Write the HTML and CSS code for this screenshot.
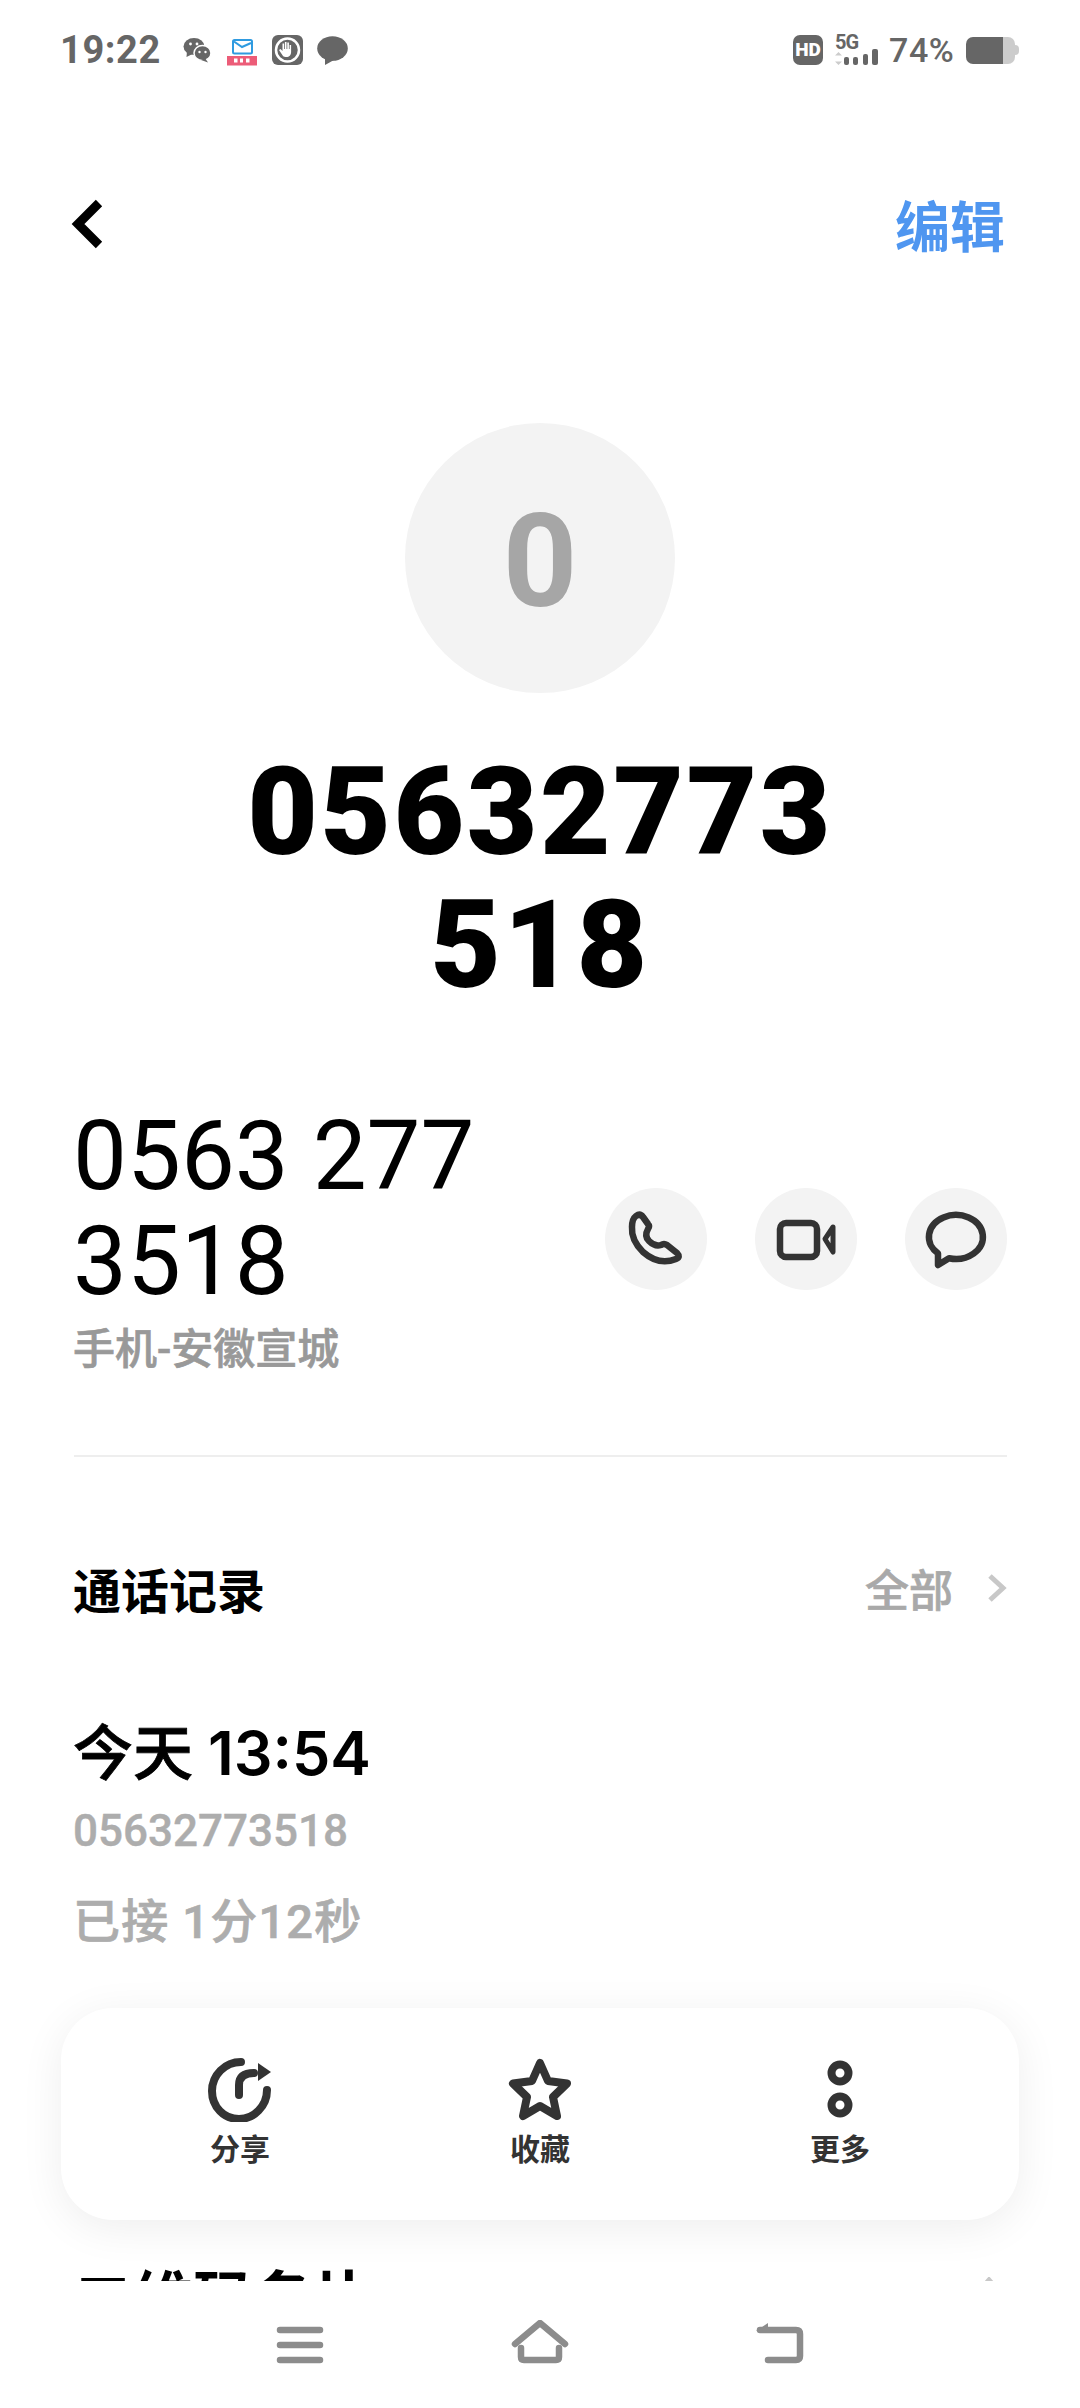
FILE: index.html
```html
<!DOCTYPE html>
<html lang="zh-CN">
<head>
<meta charset="utf-8">
<title>联系人详情</title>
<link rel="stylesheet" href="styles.css">
</head>
<body>
<div class="page">
  <header class="status">
    <div class="status-left">
      <span class="time">19:22</span>
      <svg class="ic-wechat" viewBox="0 0 28 25">
        <ellipse class="fill-dark" cx="11" cy="8.500" rx="10.500" ry="8.500"/>
        <path class="fill-dark" d="M4 13l-.5 6 6-3z"/>
        <ellipse class="fill-dark gap-white" cx="19.500" cy="15" rx="8.500" ry="7.500"/>
        <path class="fill-dark" d="M22 20l3 4.500-7-2.500z"/>
        <circle class="fill-white" cx="7.500" cy="6" r="1.400"/><circle class="fill-white" cx="14" cy="6" r="1.400"/>
        <circle class="fill-white" cx="16.500" cy="14" r="1.200"/><circle class="fill-white" cx="22.500" cy="14" r="1.200"/>
      </svg>
      <svg class="ic-mail" viewBox="0 0 30 27">
        <rect class="mail-body" x="6" y="1" width="19" height="13.500" rx="1.500"/>
        <path class="mail-body" d="M7 2.500l8 5.500 9-4"/>
        <rect class="mail-band" x="0" y="17" width="30" height="9.500"/>
        <rect class="fill-white" x="7" y="19.500" width="3.500" height="4"/><rect class="fill-white" x="13" y="19.500" width="3" height="4"/><rect class="fill-white" x="19" y="19.500" width="3.500" height="4"/>
      </svg>
      <svg class="ic-hand" viewBox="0 0 31 30">
        <rect class="fill-dark" width="31" height="30" rx="6"/>
        <circle class="ring-white" cx="15.500" cy="15" r="11.500"/>
        <path class="fill-white" d="M11 21l-4-6 1.500-1 2 2V8.500h1.600V14h.8V7h1.600v7h.8V7.500h1.600V14h.7V10h1.500v7c0 3-2 5-4.500 5-1.500 0-3-.3-3.600-1z"/>
      </svg>
      <svg class="ic-bubble" viewBox="0 0 31 29">
        <ellipse class="fill-dark" cx="15.500" cy="12.500" rx="15.300" ry="12.300"/>
        <path class="fill-dark" d="M8 21v8l9-5z"/>
      </svg>
    </div>
    <div class="status-right">
      <span class="hd">HD</span>
      <div class="signal">
        <span class="five-g">5G</span>
        <svg class="ic-bars" viewBox="0 0 45 16">
          <path class="fill-light" d="M3.500 3l3.500 3.500H0zM3.500 16L7 12.500H0z"/>
          <rect class="fill-dark" x="9" y="8" width="5" height="8" rx="2"/>
          <rect class="fill-dark" x="18" y="8" width="5" height="8" rx="2"/>
          <rect class="fill-dark" x="28" y="5" width="5" height="11" rx="2"/>
          <rect class="fill-dark" x="37" y="0" width="6" height="16" rx="2"/>
        </svg>
      </div>
      <span class="battery-pct">74%</span>
      <div class="battery"><span class="battery-level"></span><span class="battery-nub"></span></div>
    </div>
  </header>

  <nav class="topbar">
    <svg class="ic-back" viewBox="0 0 34 52"><path d="M29 4L8 25l21 21"/></svg>
    <span class="edit">编辑</span>
  </nav>

  <div class="avatar">0</div>
  <h1 class="name">05632773<br>518</h1>

  <section class="contact">
    <div class="contact-info">
      <div class="phone">0563 277<br>3518</div>
      <div class="phone-label">手机-安徽宣城</div>
    </div>
    <div class="actions">
      <span class="round-btn">
        <svg class="ic-round" viewBox="0 0 102 102"><path transform="translate(24 24)" d="M7 4Q11 1 14 5L19 12Q21 14 19 17Q15 24 20 29Q26 35 32 33Q35 31 38 33L48 41Q52 45 47 47Q30 54 14 40Q2 28 3 15Q3 7 7 4Z"/></svg>
      </span>
      <span class="round-btn">
        <svg class="ic-round" viewBox="0 0 102 102"><rect x="25" y="35" width="37" height="34" rx="6"/><path class="thin" d="M78 39L70 51l8 13z"/></svg>
      </span>
      <span class="round-btn">
        <svg class="ic-round" viewBox="0 0 102 102"><path d="M33 65.400A27 22 0 1 1 44 70.200L33 77Z"/></svg>
      </span>
    </div>
  </section>

  <hr class="divider">

  <div class="section-head">
    <span class="section-title">通话记录</span>
    <span class="section-more">全部
      <svg class="ic-chevron" viewBox="0 0 20 30"><path d="M3 3l13 12L3 27"/></svg>
    </span>
  </div>

  <div class="record">
    <div class="record-time">今天 <span class="record-clock">13:54</span></div>
    <div class="record-number">05632773518</div>
    <div class="record-duration">已接 1分12秒</div>
  </div>

  <div class="qr-row">
    <span class="qr-title">二维码名片</span>
    <svg class="ic-up" viewBox="0 0 30 20"><path d="M3 17L15 3l12 14"/></svg>
  </div>

  <div class="dock">
    <div class="dock-item">
      <svg class="ic-dock" viewBox="0 0 64 64"><path d="M33 4C17 4 4 17 4 33s12 28 27 28 28-13 28-29"/><path d="M31 37V27Q31 15 46 15"/><path class="solid" d="M63 14L50 5v18z"/></svg>
      <span class="dock-label">分享</span>
    </div>
    <div class="dock-item">
      <svg class="ic-dock" viewBox="0 0 64 64"><path d="M32 5l8 18 19 2.500-14 13.500 4 19-17-10-17 10 4-19L5 25.500 24 23z"/></svg>
      <span class="dock-label">收藏</span>
    </div>
    <div class="dock-item">
      <svg class="ic-dock" viewBox="0 0 64 64"><circle cx="32" cy="15" r="8.500"/><circle cx="32" cy="47" r="8.500"/></svg>
      <span class="dock-label">更多</span>
    </div>
  </div>

  <footer class="navbar">
    <svg class="ic-nav" viewBox="0 0 60 50"><path d="M10 10h40M10 25h40M10 40h40"/></svg>
    <svg class="ic-nav" viewBox="0 0 60 50"><path d="M5 24L30 3l25 21"/><path d="M11 28v9q0 3 3 3h32q3 0 3-3v-9"/></svg>
    <svg class="ic-nav" viewBox="0 0 60 50"><path d="M10 10h36q4 0 4 4v22q0 4-4 4H18"/><path class="nav-head" d="M6 11L18 3v8z"/></svg>
  </footer>
</div>
</body>
</html>
```
FILE: styles.css
```css
* { box-sizing: border-box; }

html, body { margin: 0; padding: 0; background: #fff; }

.page {
  position: relative;
  width: 1080px;
  height: 2408px;
  overflow: hidden;
  background: #fff;
  color: #000;
  font-family: Roboto, "Noto Sans CJK SC", sans-serif;
}

/* status bar */
.status {
  display: flex;
  justify-content: space-between;
  align-items: center;
  height: 100px;
  padding: 0 60px;
}
.status-left, .status-right { display: flex; align-items: center; }
.time { width: 123px; font-size: 38px; font-weight: 700; color: #666; letter-spacing: .6px; }
.fill-dark { fill: #666; }
.fill-white { fill: #fff; }
.fill-light { fill: #ccc; }
.gap-white { stroke: #fff; stroke-width: 1.500; }
.ic-wechat { width: 28px; height: 25px; margin-right: 16px; }
.ic-mail { width: 30px; height: 27px; margin-top: 5px; margin-right: 15px; }
.mail-body { fill: none; stroke: #2f9be0; stroke-width: 2; }
.mail-band { fill: #ec5c78; }
.ic-hand { width: 31px; height: 30px; margin-right: 14px; }
.ring-white { fill: none; stroke: #fff; stroke-width: 2.500; }
.ic-bubble { width: 31px; height: 29px; }

.hd {
  width: 30px; height: 30px;
  margin-right: 12px;
  border-radius: 7px;
  background: #666;
  color: #fff;
  font-size: 19px; font-weight: 900;
  line-height: 30px;
  text-align: center;
}
.signal { display: flex; flex-direction: column; width: 45px; margin-right: 10px; }
.five-g { font-size: 20px; font-weight: 700; color: #666; line-height: 14px; letter-spacing: -1px; }
.ic-bars { display: block; width: 45px; height: 16px; }
.battery-pct { width: 77px; margin-left: -1px; font-size: 34px; font-weight: 500; color: #666; letter-spacing: .6px; }
.battery { display: flex; align-items: center; width: 53px; height: 27px; margin-right: 1px; }
.battery-level {
  width: 49px; height: 27px;
  border-radius: 7px;
  background: linear-gradient(to right, #666 0 37px, #ccc 37px);
}
.battery-nub { width: 4px; height: 10px; border-radius: 0 4px 4px 0; background: #ccc; }

/* title bar */
.topbar {
  display: flex;
  justify-content: space-between;
  align-items: center;
  height: 100px;
  margin-top: 75px;
  padding: 0 75px 0 70px;
}
.ic-back { width: 34px; height: 52px; fill: none; stroke: #000; stroke-width: 9; }
.edit { padding-bottom: 5px; font-size: 55px; font-weight: 700; color: #4f96f0; }

/* identity */
.avatar {
  width: 270px; height: 270px;
  margin: 148px auto 0;
  border-radius: 50%;
  background: #f3f3f3;
  color: #a6a6a6;
  font-size: 130px; font-weight: 700;
  line-height: 278px;
  text-align: center;
}
.name {
  margin: 53px 0 0;
  font-size: 122px; font-weight: 900;
  line-height: 133px;
  text-align: center;
  letter-spacing: 2.500px;
}

/* phone number row */
.contact {
  display: flex;
  justify-content: space-between;
  align-items: center;
  margin-top: 92px;
  padding: 0 73px;
}
.phone { font-size: 96px; line-height: 105px; }
.phone-label {
  margin-top: 8px;
  font-size: 42px; font-weight: 500;
  line-height: 56px;
  color: #999;
  -webkit-text-stroke: .7px #999;
}
.actions { display: flex; gap: 48px; padding-bottom: 5px; }
.round-btn { width: 102px; height: 102px; border-radius: 50%; background: #f3f3f3; }
.ic-round { display: block; width: 102px; height: 102px; fill: none; stroke: #333; stroke-width: 6.500; stroke-linejoin: round; }
.ic-round .thin { stroke-width: 5; }

.divider { height: 2px; margin: 77px 73px 0 74px; border: 0; background: #eee; }

/* call history */
.section-head {
  display: flex;
  justify-content: space-between;
  align-items: center;
  height: 60px;
  margin-top: 101px;
  padding: 0 73px;
}
.section-title { font-size: 48px; font-weight: 700; }
.section-more {
  display: flex;
  align-items: center;
  font-size: 44px; font-weight: 500;
  color: #a9a9a9;
  -webkit-text-stroke: .7px #a9a9a9;
}
.ic-chevron { width: 20px; height: 30px; margin-left: 34px; fill: none; stroke: #c8c8c8; stroke-width: 5; }

.record { margin-top: 95px; padding: 0 73px; }
.record-time {
  font-size: 60px; font-weight: 500;
  line-height: 80px;
  -webkit-text-stroke: .8px #000;
}
.record-clock { font-family: Inter, sans-serif; font-size: 61px; font-weight: 600; -webkit-text-stroke: 0; }
.record-number { margin-top: 11px; font-size: 44px; font-weight: 500; line-height: 50px; color: #adadad; -webkit-text-stroke: .4px #adadad; }
.record-duration {
  margin-top: 38px;
  font-size: 47px; font-weight: 500;
  line-height: 56px;
  letter-spacing: 1.200px;
  color: #adadad;
  -webkit-text-stroke: .7px #adadad;
}

.qr-row {
  display: flex;
  justify-content: space-between;
  align-items: center;
  height: 80px;
  margin-top: 311px;
  padding: 0 76px 0 73px;
}
.qr-title { font-size: 60px; font-weight: 700; line-height: 80px; }
.ic-up { width: 30px; height: 20px; margin-bottom: 28px; fill: none; stroke: #c8c8c8; stroke-width: 5; }

/* floating action card */
.dock {
  position: absolute;
  left: 61px; top: 2008px;
  display: flex;
  justify-content: center;
  align-items: flex-start;
  width: 958px; height: 212px;
  padding-top: 50px;
  border-radius: 52px;
  background: #fff;
  box-shadow: 0 8px 44px rgba(0, 0, 0, .07);
}
.dock-item { display: flex; flex-direction: column; align-items: center; width: 300px; }
.ic-dock { width: 64px; height: 64px; fill: none; stroke: #333; stroke-width: 8; stroke-linejoin: round; stroke-linecap: round; }
.ic-dock .solid { fill: #333; stroke: none; }
.dock-label { margin-top: 8px; font-size: 30px; font-weight: 700; line-height: 40px; color: #333; white-space: nowrap; }

/* system navigation */
.navbar {
  position: absolute;
  left: 0; right: 0; bottom: 0;
  display: flex;
  justify-content: center;
  gap: 180px;
  height: 127px;
  padding-top: 39px;
  background: #fff;
}
.ic-nav { width: 60px; height: 50px; fill: none; stroke: #8c8c8c; stroke-width: 6.500; stroke-linecap: round; stroke-linejoin: round; }
.nav-head { fill: #8c8c8c; stroke: none; }
```
